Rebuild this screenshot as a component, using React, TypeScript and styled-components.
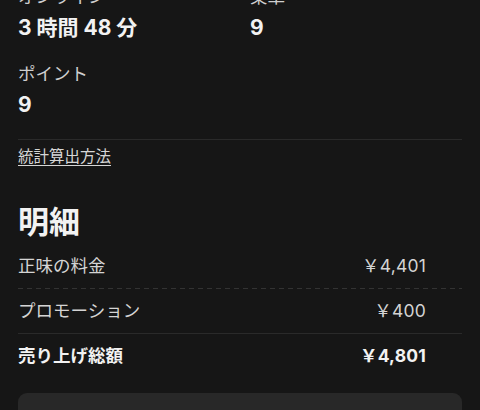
import styled, { createGlobalStyle } from "styled-components";

// global
const GlobalStyle = createGlobalStyle`
  html, body {
    margin: 0;
    padding: 0;
    background: #161616;
  }
  body {
    font-family: Inter, "Noto Sans CJK JP", sans-serif;
    color: #eeeeee;
    overflow: hidden;
  }
`;

// styled
const Page = styled.div`
  width: 480px;
  height: 410px;
  overflow: hidden;
  background: #161616;
`;

const Content = styled.div`
  margin-top: -15px;
  padding: 0 18px;
`;

const StatsGrid = styled.div`
  display: grid;
  grid-template-columns: 232px 1fr;
  row-gap: 19px;
`;

const Stat = styled.div`
  display: flex;
  flex-direction: column;
  gap: 4px;
`;

const StatLabel = styled.span`
  font-size: 17.5px;
  line-height: 24px;
  color: #cfcfcf;
`;

const StatValue = styled.span`
  font-size: 21px;
  line-height: 30px;
  font-weight: 700;
  color: #f2f2f2;
`;

const Divider = styled.div<{ $dashed?: boolean }>`
  height: 1px;
  background: ${({ $dashed }) =>
    $dashed
      ? "repeating-linear-gradient(90deg, #333 0 5px, transparent 5px 9px)"
      : "#2a2a2a"};
`;

const TopDivider = styled(Divider)`
  margin-top: 19px;
`;

const MethodLink = styled.a`
  display: inline-block;
  margin-top: 6px;
  font-size: 15.5px;
  line-height: 22px;
  color: #d6d6d6;
  text-decoration: underline;
  text-underline-offset: 3px;
  text-decoration-thickness: 1px;
  cursor: pointer;
`;

const Heading = styled.h2`
  margin: 34px 0 2px;
  font-size: 31px;
  line-height: 40px;
  font-weight: 700;
  color: #f2f2f2;
`;

const Row = styled.div<{ $total?: boolean }>`
  display: flex;
  justify-content: space-between;
  align-items: center;
  padding: 10px 36px 10px 0;
  font-size: 17.5px;
  line-height: 24px;
  font-weight: ${({ $total }) => ($total ? 700 : 400)};
  color: ${({ $total }) => ($total ? "#f2f2f2" : "#d4d4d4")};
`;

const Amount = styled.span`
  letter-spacing: 0.2px;
`;

const Card = styled.div`
  margin-top: 15px;
  height: 80px;
  background: #282828;
  border-radius: 9px;
`;

// data
const stats = [
  { label: "オンライン", value: "3 時間 48 分" },
  { label: "乗車", value: "9" },
  { label: "ポイント", value: "9" },
];

const breakdown = [
  { label: "正味の料金", amount: "￥4,401", dashed: true },
  { label: "プロモーション", amount: "￥400", dashed: false },
];

// Main
const App = () => {
  return (
    <>
      <GlobalStyle />
      <Page>
        <Content>
          <StatsGrid>
            {stats.map((s, i) => (
              <Stat key={i}>
                <StatLabel>{s.label}</StatLabel>
                <StatValue>{s.value}</StatValue>
              </Stat>
            ))}
          </StatsGrid>

          <TopDivider />
          <MethodLink>統計算出方法</MethodLink>

          <Heading>明細</Heading>

          {breakdown.map((b, i) => (
            <div key={i}>
              <Row>
                <span>{b.label}</span>
                <Amount>{b.amount}</Amount>
              </Row>
              <Divider $dashed={b.dashed} />
            </div>
          ))}

          <Row $total>
            <span>売り上げ総額</span>
            <Amount>￥4,801</Amount>
          </Row>

          <Card />
        </Content>
      </Page>
    </>
  );
};

export default App;
